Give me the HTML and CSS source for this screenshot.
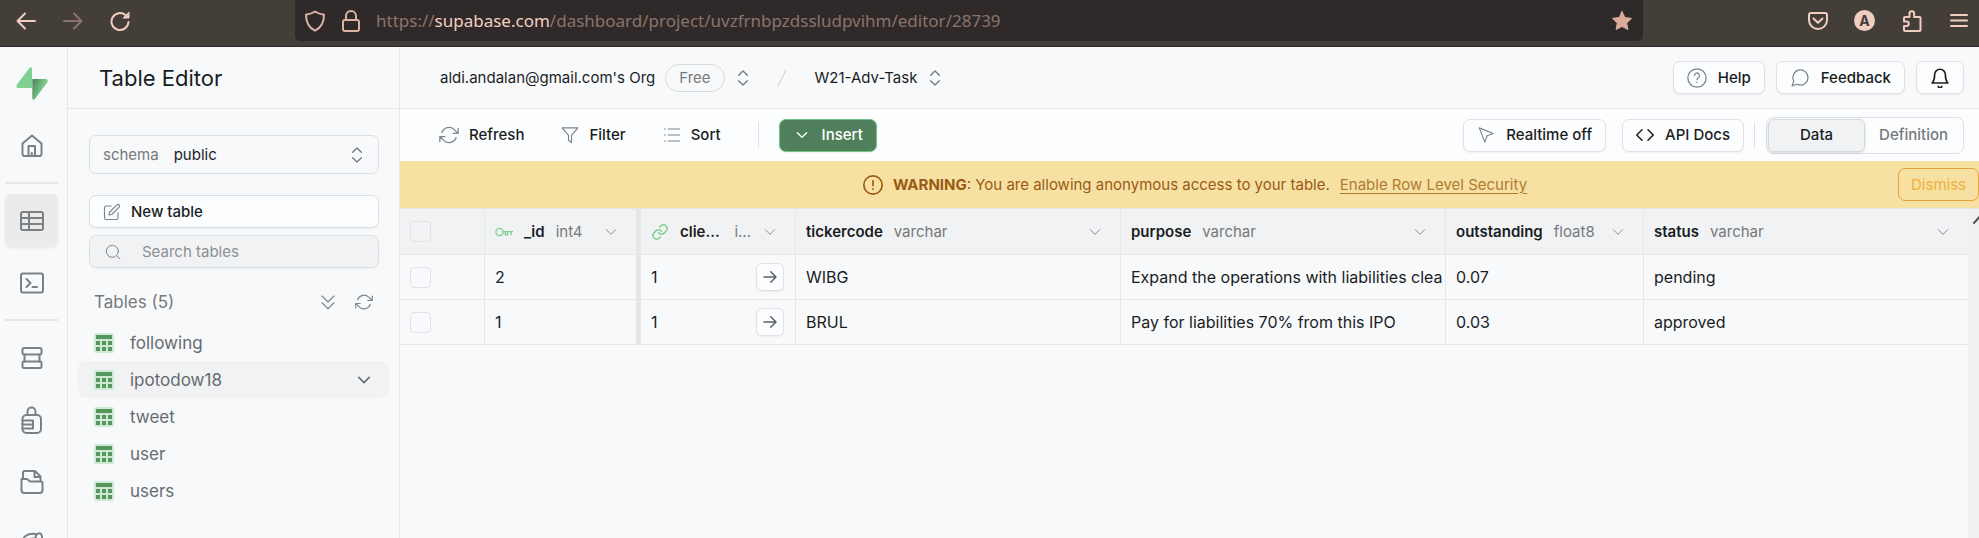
FILE: index.html
```html
<!DOCTYPE html>
<html lang="en">
<head>
<meta charset="utf-8">
<title>Table Editor | Supabase</title>
<link rel="stylesheet" href="styles.css">
</head>
<body>
<svg class="sprite" aria-hidden="true">
  <symbol id="i-refresh" viewBox="0 0 24 24"><path d="M23 4v6h-6M1 20v-6h6M3.5 9a9 9 0 0 1 14.9-3.4L23 10M1 14l4.6 4.4A9 9 0 0 0 20.500 15"/></symbol>
  <symbol id="i-down" viewBox="0 0 24 24"><path d="m5 8.500 7 7 7-7"/></symbol>
  <symbol id="i-updown" viewBox="0 0 24 24"><path d="m5.500 8 6.500-6.500L18.500 8M5.500 16l6.500 6.500 6.500-6.500"/></symbol>
  <symbol id="i-arrow" viewBox="0 0 24 24"><path d="M4 12h16M13 5l7 7-7 7"/></symbol>
  <symbol id="i-table" viewBox="0 0 20 20"><rect width="20" height="20" rx="2" fill="#cfe9d5"/><path fill="#56965f" d="M2 2h16v4H2zM2 8h4v4H2zM8 8h4v4H8zM14 8h4v4h-4zM2 14h4v4H2zM8 14h4v4H8zM14 14h4v4h-4z"/></symbol>
</svg>

<header class="browser">
  <div class="browser-nav">
    <button aria-label="Back"><svg class="ic20 w2" viewBox="0 0 20 20"><path d="M19 10H2M9 2.500 1.500 10 9 17.500"/></svg></button>
    <button aria-label="Forward" class="off"><svg class="ic20 w2" viewBox="0 0 20 20"><path d="M1 10h17M11 2.500l7.500 7.500-7.500 7.500"/></svg></button>
    <button aria-label="Reload"><svg class="ic20 w2" viewBox="0 0 20 20"><path d="M18.500 11A8.500 8.500 0 1 1 15.500 4"/><path d="M13.500 7H19V1.500z" fill="currentColor" stroke-width="1"/></svg></button>
  </div>
  <div class="address">
    <svg class="ic22 w2" viewBox="0 0 22 22"><path d="M11 1.500c3 2 5.500 2.700 9 3.200 0 7-2.500 12.800-9 16-6.500-3.200-9-9-9-16C5.500 4.200 8 3.500 11 1.500z"/></svg>
    <svg class="ic22 w2" viewBox="0 0 22 22"><rect x="3" y="10" width="16" height="11" rx="2"/><path d="M6 10V6a5 5 0 0 1 10 0v4"/></svg>
    <span class="url">https://<b>supabase.com</b>/dashboard/project/uvzfrnbpzdssludpvihm/editor/28739</span>
    <button aria-label="Bookmark" class="star"><svg class="ic22" viewBox="0 0 22 22"><path fill="currentColor" stroke="currentColor" stroke-linejoin="round" d="m11 1.500 2.900 6 6.600.900-4.800 4.600 1.200 6.600L11 16.400l-5.900 3.200L6.300 13 1.500 8.400l6.600-.9z"/></svg></button>
  </div>
  <div class="browser-tools">
    <button aria-label="Pocket"><svg class="ic20 w2" viewBox="0 0 20 20"><path d="M3 2h14a2 2 0 0 1 2 2v5a9 9 0 0 1-18 0V4a2 2 0 0 1 2-2zM5.500 7.500 10 11.800l4.500-4.300"/></svg></button>
    <button aria-label="Account" class="account">A</button>
    <button aria-label="Extensions"><svg class="ic22 w2" viewBox="0 0 22 22"><path d="M8.500 7V3.600a2.300 2.300 0 0 1 4.600 0V7h5.400a1 1 0 0 1 1 1v12a1 1 0 0 1-1 1H4a1 1 0 0 1-1-1v-4h2.500a2 2 0 0 0 0-4.500H3V8a1 1 0 0 1 1-1z"/></svg></button>
    <button aria-label="Menu"><svg class="ic20 w2" viewBox="0 0 20 20"><path d="M2 4h16M2 9.500h16M2 15h16"/></svg></button>
  </div>
</header>

<div class="app">
  <nav class="rail" aria-label="Main">
    <a href="#" class="logo" aria-label="Supabase"><svg viewBox="0 0 32 33"><defs><linearGradient id="bolt" x1="0" y1="0" x2="1" y2=".6"><stop offset="0" stop-color="#4c7d56"/><stop offset=".7" stop-color="#7ccb8e"/></linearGradient></defs><path fill="#7fd193" d="M16 1.500V21H2.200C.4 21 0 19 1 17.600L13.400 1c.9-1.200 2.600-.9 2.600.5z"/><path fill="url(#bolt)" d="M16.300 31.500V12h13.500c1.800 0 2.500 2 1.400 3.400L18.800 32c-.8 1.100-2.500.8-2.500-.5z"/></svg></a>
    <a href="#" aria-label="Home"><svg class="ic24 w2" viewBox="0 0 24 24"><path d="m2.500 9.500 9.500-8 9.500 8V20a2 2 0 0 1-2 2h-15a2 2 0 0 1-2-2zM8.500 22V12h6.500v10M11.800 22v-3"/></svg></a>
    <hr>
    <a href="#" class="active" aria-label="Table Editor"><svg class="ic24 w2" viewBox="0 0 24 24"><rect x="1" y="3" width="22" height="18" rx="2"/><path d="M1 9h22M1 15h22M9 3v18"/></svg></a>
    <a href="#" aria-label="SQL Editor"><svg class="ic24 w2" viewBox="0 0 24 24"><rect x="1" y="2.500" width="22" height="19" rx="2"/><path d="m6.500 8 4 4-4 4M12.500 16h4.500"/></svg></a>
    <hr>
    <a href="#" aria-label="Database"><svg class="ic24 w2" viewBox="0 0 24 24"><rect x="2.500" y="2" width="19" height="6.500" rx="1.500"/><rect x="2.500" y="15.500" width="19" height="6.500" rx="1.500"/><path d="M4.500 8.500v7M19.500 8.500v7"/></svg></a>
    <a href="#" aria-label="Authentication"><svg class="ic28 w2" viewBox="0 0 28 28"><rect x="4.500" y="9" width="18.500" height="18" rx="4"/><path d="M9.500 9V5.500a4 4 0 0 1 8 0V9M4.500 14.500H15v8H4.500M4.500 18.500H15"/></svg></a>
    <a href="#" aria-label="Storage"><svg class="ic24 w2" viewBox="0 0 24 24"><path d="M3 9V2.500A1.500 1.500 0 0 1 4.500 1H15l5.500 5.500V11M14.500 1v6h6M1.500 9H7l3 2.500h11a1.500 1.500 0 0 1 1.500 1.500v7a3 3 0 0 1-3 3h-15a3 3 0 0 1-3-3z"/></svg></a>
    <a href="#" aria-label="Realtime"><svg class="ic24 w2" viewBox="0 0 24 24"><path d="M2 12C2 5 7 1 15.500 2M6 12c0-4 4-6 9-5.500M15.500 6.500c0-6 6-7 6.500-2V14"/></svg></a>
  </nav>

  <aside class="sidebar">
    <h1>Table Editor</h1>
    <div class="side-body">
      <button class="schema"><span class="muted">schema</span><span>public</span><svg class="ic16 w2 end"><use href="#i-updown"/></svg></button>
      <button class="box new"><svg class="ic18 w15" viewBox="0 0 24 24"><path d="M11 4H4a2 2 0 0 0-2 2v14a2 2 0 0 0 2 2h14a2 2 0 0 0 2-2v-7M18.500 2.500a2.100 2.100 0 0 1 3 3L12 15l-4 1 1-4z"/></svg>New table</button>
      <label class="box search"><svg class="ic16 w15" viewBox="0 0 24 24"><circle cx="11" cy="11" r="9"/><path d="m18 18 4.500 4.500"/></svg><input type="search" placeholder="Search tables" aria-label="Search tables"></label>
      <div class="list-head"><h2>Tables (5)</h2>
        <button aria-label="Expand all"><svg class="ic18 w15" viewBox="0 0 24 24"><path d="m4 13 8 8 8-8M4 4l8 8 8-8"/></svg></button>
        <button aria-label="Refresh tables"><svg class="ic18 w15"><use href="#i-refresh"/></svg></button>
      </div>
      <ul class="tables">
        <li><a href="#"><svg class="ic20"><use href="#i-table"/></svg>following</a></li>
        <li class="current"><a href="#"><svg class="ic20"><use href="#i-table"/></svg>ipotodow18</a><button aria-label="Table options"><svg class="ic18 w2"><use href="#i-down"/></svg></button></li>
        <li><a href="#"><svg class="ic20"><use href="#i-table"/></svg>tweet</a></li>
        <li><a href="#"><svg class="ic20"><use href="#i-table"/></svg>user</a></li>
        <li><a href="#"><svg class="ic20"><use href="#i-table"/></svg>users</a></li>
      </ul>
    </div>
  </aside>

  <main class="main">
    <div class="topbar">
      <button class="crumb org">aldi.andalan@gmail.com's Org<span class="pill">Free</span><svg class="ic16 w2"><use href="#i-updown"/></svg></button>
      <svg class="slash" viewBox="0 0 10 18"><path d="M9 1 1 17"/></svg>
      <button class="crumb">W21-Adv-Task<svg class="ic16 w2"><use href="#i-updown"/></svg></button>
      <div class="actions">
        <button class="btn"><svg class="ic20 w15" viewBox="0 0 24 24"><circle cx="12" cy="12" r="11"/><path d="M9 9a3 3 0 1 1 4.500 2.600c-1 .6-1.500 1.100-1.500 2.400M12 17v.5"/></svg>Help</button>
        <button class="btn"><svg class="ic20 w15" viewBox="0 0 24 24"><path d="M21.500 11.500a9 9 0 0 1-13 8L2.500 21.500l2-6a9 9 0 1 1 17-4z"/></svg>Feedback</button>
        <button class="btn bell" aria-label="Notifications"><svg class="ic20 w2" viewBox="0 0 24 24"><path d="M18.500 8a6.500 6.500 0 0 0-13 0c0 7-3 10-3 10h19s-3-3-3-10M14 22a2 2 0 0 1-4 0"/></svg></button>
      </div>
    </div>

    <div class="toolbar">
      <button class="plain"><svg class="ic20 w15"><use href="#i-refresh"/></svg>Refresh</button>
      <button class="plain"><svg class="ic18 w15" viewBox="0 0 24 24"><path d="M22.500 2.500h-21L10 12.500V19l4 3v-9.500z"/></svg>Filter</button>
      <button class="plain"><svg class="ic18 w15" viewBox="0 0 24 24"><path d="M7 4h15M7 12h15M7 20h15M2 4h1M2 12h1M2 20h1"/></svg>Sort</button>
      <span class="rule"></span>
      <button class="btn insert"><svg class="ic16 w2"><use href="#i-down"/></svg>Insert</button>
      <div class="tool-end">
        <button class="btn"><svg class="ic18 w15" viewBox="0 0 24 24"><path d="m3 2.500 7.500 19 3-8.500 8-3z"/></svg>Realtime off</button>
        <button class="btn docs"><svg class="ic18 w2" viewBox="0 0 24 24"><path d="m16 19 7-7-7-7M8 5l-7 7 7 7"/></svg>API Docs</button>
        <span class="rule"></span>
        <div class="segment"><button class="on">Data</button><button>Definition</button></div>
      </div>
    </div>

    <div class="warning">
      <p><svg class="ic20 w2" viewBox="0 0 24 24"><circle cx="12" cy="12" r="11"/><path d="M12 7v5.500M12 16.500v.5"/></svg><span><strong>WARNING</strong>: You are allowing anonymous access to your table.</span><a href="#">Enable Row Level Security</a></p>
      <button class="dismiss">Dismiss</button>
    </div>

    <div class="grid">
      <table>
        <colgroup><col class="c-check"><col class="c-id"><col class="c-client"><col class="c-text"><col class="c-text"><col class="c-num"><col></colgroup>
        <thead><tr>
          <th><input type="checkbox" aria-label="Select all rows"></th>
          <th class="frozen"><div class="head"><svg class="key" viewBox="0 0 20 12"><circle cx="5" cy="6" r="4"/><path d="M9 5.500h10.500M18 6v3M14 6v3h-2.500V6"/></svg><b>_id</b><span>int4</span><svg class="ic16 chev"><use href="#i-down"/></svg></div></th>
          <th><div class="head"><svg class="link" viewBox="0 0 24 24"><path d="M10 13a5 5 0 0 0 7.500.5l3-3a5 5 0 0 0-7-7l-1.800 1.700M14 11a5 5 0 0 0-7.500-.5l-3 3a5 5 0 0 0 7 7l1.800-1.700"/></svg><b class="name-short">clie...</b><span>i...</span><svg class="ic16 chev"><use href="#i-down"/></svg></div></th>
          <th><div class="head"><b>tickercode</b><span>varchar</span><svg class="ic16 chev"><use href="#i-down"/></svg></div></th>
          <th><div class="head"><b>purpose</b><span>varchar</span><svg class="ic16 chev"><use href="#i-down"/></svg></div></th>
          <th><div class="head"><b>outstanding</b><span>float8</span><svg class="ic16 chev"><use href="#i-down"/></svg></div></th>
          <th><div class="head"><b>status</b><span>varchar</span><svg class="ic16 chev"><use href="#i-down"/></svg></div></th>
        </tr></thead>
        <tbody>
          <tr><td><input type="checkbox" aria-label="Select row 2"></td><td class="frozen">2</td><td><div class="ref">1<button aria-label="View referenced record"><svg class="ic18 w2"><use href="#i-arrow"/></svg></button></div></td><td>WIBG</td><td>Expand the operations with liabilities clea</td><td>0.07</td><td>pending</td></tr>
          <tr><td><input type="checkbox" aria-label="Select row 1"></td><td class="frozen">1</td><td><div class="ref">1<button aria-label="View referenced record"><svg class="ic18 w2"><use href="#i-arrow"/></svg></button></div></td><td>BRUL</td><td>Pay for liabilities 70% from this IPO</td><td>0.03</td><td>approved</td></tr>
        </tbody>
      </table>
      <div class="scroll"><svg viewBox="0 0 11 16"><path d="M6 14 14 5"/></svg></div>
    </div>
  </main>
</div>
</body>
</html>
```
FILE: styles.css
```css
* { box-sizing: border-box; }

body {
  margin: 0;
  height: 100vh;
  display: flex;
  flex-direction: column;
  overflow: hidden;
  background: #f8f9fb;
  color: #1a1d1f;
  font: 15px/20px Inter, "Liberation Sans", sans-serif;
}

button, input { font: inherit; color: inherit; }
button { display: flex; align-items: center; padding: 0; border: 0; background: none; white-space: nowrap; }
a { color: inherit; text-decoration: none; }
svg { flex: none; fill: none; stroke-linecap: round; stroke-linejoin: round; }
.sprite { position: absolute; width: 0; height: 0; }

.ic16 { width: 16px; height: 16px; }
.ic18 { width: 18px; height: 18px; }
.ic20 { width: 20px; height: 20px; }
.ic22 { width: 22px; height: 22px; }
.ic24 { width: 24px; height: 24px; }
.ic28 { width: 28px; height: 28px; }
.w15 { stroke: #7e8488; stroke-width: 1.5; }
.w2 { stroke: currentColor; stroke-width: 2; }

/* Browser chrome */
.browser {
  flex: none;
  height: 47px;
  display: flex;
  padding-bottom: 5px;
  background: #443e39;
  border-bottom: 1px solid #2f2a29;
  color: #f0cdbf;
}
.browser-nav { width: 295px; display: flex; align-items: center; gap: 27px; padding-left: 16px; }
.browser-nav .off { color: #8b746b; }
.address {
  flex: 1;
  display: flex;
  align-items: center;
  gap: 14px;
  padding: 0 10px 0 9px;
  background: #2f2a29;
  border-radius: 0 0 5px 5px;
  color: #d9b3a5;
}
.url { color: #8b746b; font: 17px/24px "Noto Sans", "Open Sans", sans-serif; }
.url b { color: #f3cfc0; font-weight: 400; }
.star { margin-left: auto; color: #daaa9a; }
.browser-tools { width: 336px; display: flex; align-items: center; justify-content: flex-end; gap: 26px; padding-right: 10px; }
.account {
  width: 21px;
  height: 21px;
  justify-content: center;
  border-radius: 50%;
  background: #f0cdbf;
  color: #443d39;
  font-size: 14px;
  font-weight: 700;
}

.app { flex: 1; min-height: 0; display: flex; }

/* Icon rail */
.rail {
  flex: none;
  width: 68px;
  display: flex;
  flex-direction: column;
  gap: 9px;
  padding: 10px 9px 0 5px;
  border-right: 1px solid #e4e6e8;
  color: #7b8085;
  overflow: hidden;
}
.rail a { flex: none; height: 53px; display: flex; align-items: center; justify-content: center; border-radius: 6px; }
.rail .logo svg { width: 32px; height: 33px; }
.rail .active { background: #ebebec; box-shadow: 0 1px 3px #00000012; }
.rail hr { flex: none; width: 100%; height: 2px; margin: 1px 0; border: 0; background: #e4e6e8; }

/* Sidebar */
.sidebar { flex: none; width: 332px; border-right: 1px solid #e4e6e8; }
h1 {
  height: 62px;
  margin: 0;
  padding: 0 31px;
  border-bottom: 1px solid #e4e6e8;
  font-size: 22px;
  font-weight: 400;
  line-height: 62px;
}
.side-body { padding: 26px 10px 0; }
.schema, .box {
  width: 290px;
  margin: 0 11px;
  padding: 0 13px;
  border: 1px solid #dcdfe1;
  border-radius: 7px;
}
.schema { height: 39px; gap: 15px; margin-bottom: 21px; }
.muted, .schema svg { color: #74797d; }
.end { margin-left: auto; }
.box { height: 33px; display: flex; align-items: center; box-shadow: 0 1px 2px #0000000d; }
.new { gap: 10px; margin-bottom: 7px; background: #fcfdfe; font-weight: 500; }
.search { gap: 21px; padding-left: 15px; background: #f1f2f4; }
.search input { flex: 1; min-width: 0; padding: 0; border: 0; outline: 0; background: none; }
.search input::placeholder { color: #8b9094; opacity: 1; }
.list-head { display: flex; align-items: center; gap: 18px; padding: 22px 16px 10px; color: #74797d; }
.list-head h2 { flex: 1; margin: 0; font-size: 17px; line-height: 24px; font-weight: 400; }
.tables { margin: 0; padding: 0; list-style: none; color: #666b6f; font-size: 17px; }
.tables li { height: 37px; display: flex; align-items: center; padding: 0 16px; border-radius: 8px; }
.tables a { flex: 1; display: flex; align-items: center; gap: 16px; }
.current { background: #f1f2f4; }

/* Main column */
.main { flex: 1; min-width: 0; display: flex; flex-direction: column; font-weight: 500; }
.topbar { flex: none; height: 62px; display: flex; align-items: center; padding: 0 15px 0 40px; border-bottom: 1px solid #e4e6e8; }
.crumb { gap: 10px; font-weight: 400; }
.crumb svg { color: #74797d; }
.pill { padding: 3px 13px; border: 1px solid #d9dcde; border-radius: 14px; color: #74797d; font-weight: 400; }
.slash { width: 10px; height: 18px; margin: 0 28px 0 26px; stroke: #c5c8cb; }
.actions { margin-left: auto; display: flex; gap: 11px; }
.btn {
  height: 33px;
  gap: 11px;
  padding: 0 13px;
  background: #fcfdfe;
  border: 1px solid #dfe1e4;
  border-radius: 7px;
  box-shadow: 0 1px 2px #0000000f;
}

.toolbar { flex: none; height: 52px; display: flex; align-items: center; padding: 0 15px 0 39px; background: #fcfdfe; }
.plain { gap: 10px; margin-right: 37px; }
.rule { width: 1px; height: 26px; background: #dfe1e4; }
.insert { gap: 12px; margin-left: 20px; padding: 0 13px 0 14px; background: #4f805b; border-color: #72c486; color: #fff; }
.tool-end { margin-left: auto; display: flex; align-items: center; }
.docs { margin: 0 10px 0 16px; }
.segment { display: flex; margin-left: 11px; padding: 1px; border: 1px solid #dfe1e4; border-radius: 7px; color: #74797d; }
.segment button { height: 33px; padding: 0 14px; }
.segment .on {
  width: 97px;
  justify-content: center;
  background: #f1f2f4;
  border: 1px solid #d5d8da;
  border-radius: 6px;
  box-shadow: 0 1px 3px #00000026;
  color: #1a1d1f;
}

.warning { flex: none; height: 48px; display: flex; align-items: center; background: #f7e1a2; border-bottom: 1px solid #e4e6e8; color: #9a5a15; }
.warning p { flex: 1; display: flex; align-items: center; justify-content: center; gap: 10px; margin: 0; padding-left: 92px; font-weight: 400; }
.warning strong { font-weight: 700; }
.warning a { color: #b07a35; text-decoration: underline; text-underline-offset: 3px; }
.dismiss { height: 33px; padding: 0 12px; border: 1px solid #e2a33b; border-radius: 7px; color: #edb040; font-weight: 400; }

/* Data grid */
.grid { flex: 1; display: flex; align-items: stretch; }
table { flex: 1; align-self: flex-start; width: 100%; table-layout: fixed; border-collapse: separate; border-spacing: 0; }
.c-check { width: 85px; }
.c-id { width: 156px; }
.c-client { width: 155px; }
.c-text { width: 325px; }
.c-num { width: 198px; }
th, td {
  height: 45px;
  padding: 0 0 0 10px;
  border: 0 solid #e4e6e8;
  border-width: 0 1px 1px 0;
  overflow: hidden;
  white-space: nowrap;
  text-align: left;
  font-weight: 400;
}
th { height: 46px; background: #f1f2f4; }
th:last-child, td:last-child { border-right: 0; }
td { font-size: 16px; }
.frozen { border-right-width: 5px; }
.head { display: flex; align-items: center; gap: 11px; padding-right: 17px; }
.head b { font-weight: 600; }
.head span { color: #74797d; }
.head .chev { margin-left: auto; stroke: #8b9094; stroke-width: 1.5; }
.key { width: 18px; height: 12px; stroke: #7fd193; stroke-width: 1.5; }
.link { width: 18px; height: 18px; stroke: #7fd193; stroke-width: 2; }
.name-short { width: 44px; }
.ref { display: flex; align-items: center; justify-content: space-between; padding-right: 11px; }
.ref button {
  width: 28px;
  height: 28px;
  justify-content: center;
  background: #fcfdfe;
  border: 1px solid #dfe1e4;
  border-radius: 6px;
  box-shadow: 0 1px 2px #0000000f;
  color: #5d6266;
}
input[type="checkbox"] { appearance: none; display: block; width: 21px; height: 21px; margin: 0; border: 1px solid #e0e3e5; border-radius: 4px; }
.scroll { flex: none; width: 11px; background: #f0f0f0; }
.scroll svg { width: 11px; height: 16px; stroke: #555; stroke-width: 2; }
```
